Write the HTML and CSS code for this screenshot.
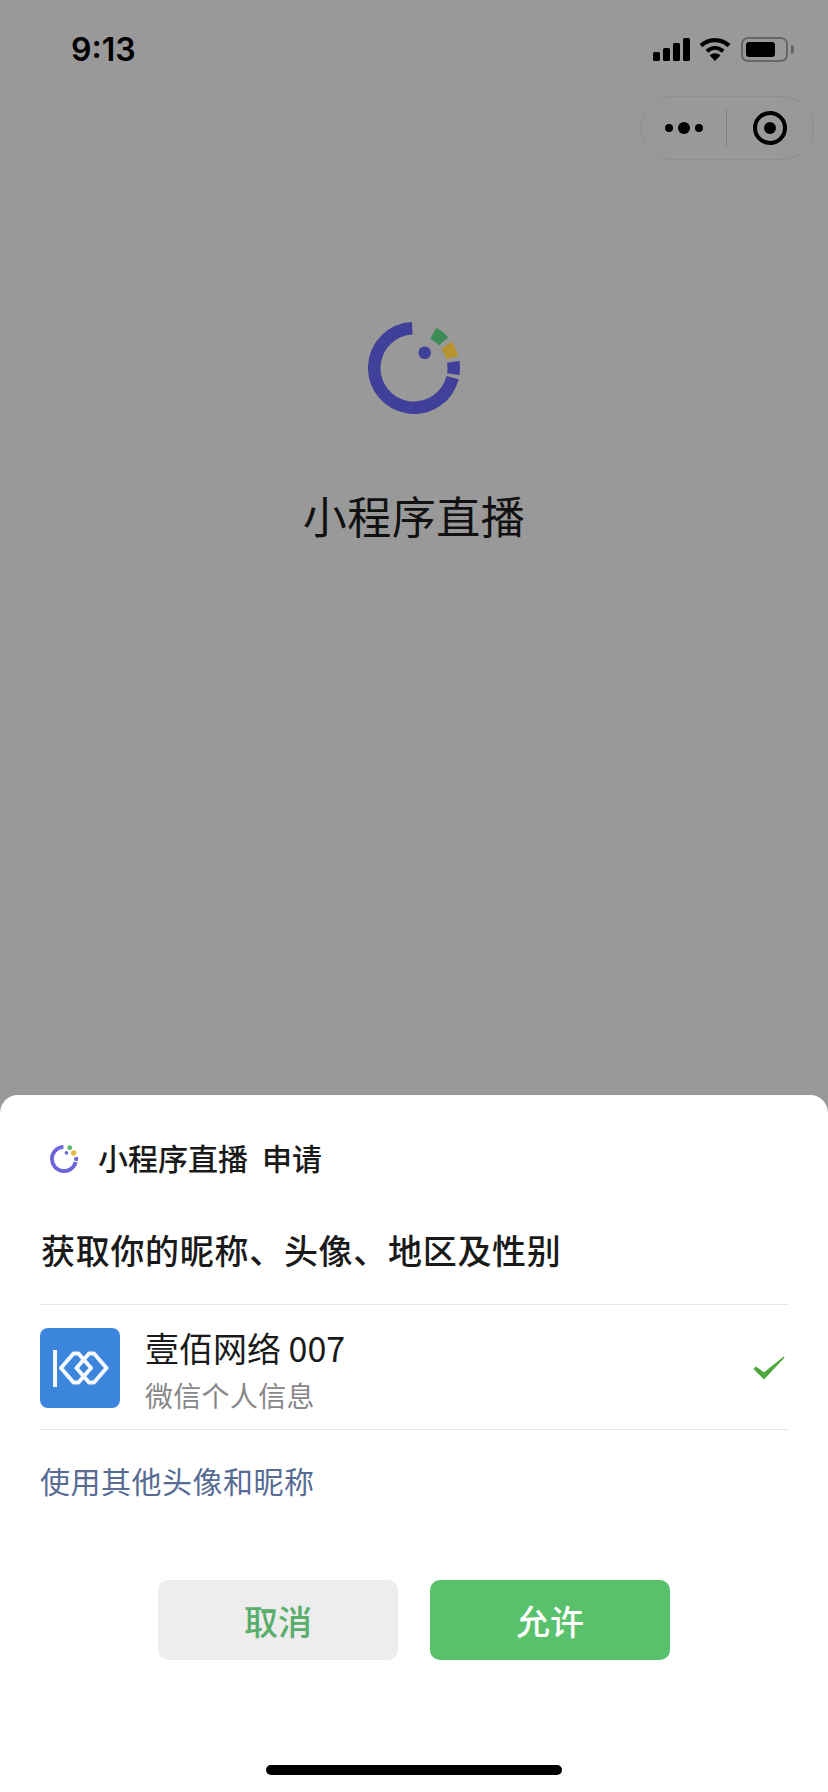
FILE: index.html
```html
<!DOCTYPE html>
<html lang="zh">
<head>
<meta charset="utf-8">
<title>小程序直播</title>
<link rel="stylesheet" href="styles.css">
</head>
<body>
<div class="page">
  <div class="dim">
    <header class="status">
      <span class="time">9:13</span>
      <div class="status-icons">
        <svg class="signal" viewBox="0 0 37 23"><rect x="0" y="14" width="7" height="9" rx="1.5"/><rect x="10" y="10" width="7" height="13" rx="1.5"/><rect x="20" y="5" width="7" height="18" rx="1.5"/><rect x="30" y="0" width="7" height="23" rx="1.5"/></svg>
        <svg class="wifi" viewBox="0 0 32 24"><path d="M2 8.6C10 1.2 22 1.2 30 8.6" fill="none" stroke="#000" stroke-width="4.2"/><path d="M7.8 14.2C12.8 9.8 19.2 9.8 24.2 14.2" fill="none" stroke="#000" stroke-width="4"/><path d="M16 24L10.6 18.4C13.8 15.6 18.2 15.6 21.4 18.4Z"/></svg>
        <div class="battery"><div class="battery-fill"></div></div>
        <div class="battery-nub"></div>
      </div>
    </header>
    <div class="capsule-row">
      <div class="capsule">
        <div class="capsule-more"><i class="dot"></i><i class="dot dot-big"></i><i class="dot"></i></div>
        <div class="capsule-line"></div>
        <div class="capsule-close"><i class="capsule-target"></i></div>
      </div>
    </div>
    <main class="hero">
      <svg class="logo-large" viewBox="0 0 92 92">
        <g fill="none" stroke-width="12.5">
          <path stroke="#40409a" d="M84.57 55.62A39.75 39.75 0 1 1 44.27 6.29"/>
          <path stroke="#40409a" d="M85.26 39.78A39.75 39.75 0 0 1 85.26 52.22"/>
          <path stroke="#b8922e" d="M78.56 23.2A39.75 39.75 0 0 1 84.39 35.71"/>
          <path stroke="#3d8b55" d="M65.4 11.3A39.75 39.75 0 0 1 75.54 19.4"/>
        </g>
        <circle cx="56.7" cy="30.8" r="6.3" fill="#40409a"/>
      </svg>
      <h1 class="hero-title">小程序直播</h1>
    </main>
  </div>
  <section class="sheet">
    <div class="app-line">
      <svg class="logo-small" viewBox="0 0 92 92">
        <path fill="none" stroke="#6a66d9" stroke-width="12.5" d="M84.57 55.62A39.75 39.75 0 1 1 44.27 6.29"/>
        <path fill="none" stroke="#6a66d9" stroke-width="12.5" d="M85.26 39.78A39.75 39.75 0 0 1 85.26 52.22"/>
        <circle cx="54" cy="26" r="6" fill="#6a66d9"/>
        <circle cx="78" cy="26" r="9" fill="#e8bb4a"/>
        <circle cx="65" cy="9" r="8" fill="#5cb870"/>
      </svg>
      <span class="app-name">小程序直播</span>
      <span class="app-verb">申请</span>
    </div>
    <h2 class="scope">获取你的昵称、头像、地区及性别</h2>
    <div class="account">
      <svg class="avatar" viewBox="0 0 80 80">
        <rect width="80" height="80" rx="8" fill="#3b86dc"/>
        <rect x="13" y="22" width="4" height="37" fill="#fff" opacity=".95"/>
        <g fill="none" stroke="#fff" stroke-width="4" stroke-linejoin="round" opacity=".95">
          <path d="M21 40L33.5 25.5H38.5L51 40L38.5 54.5H33.5Z"/>
          <path d="M36.5 40L49 25.5H54L66.5 40L54 54.5H49Z"/>
        </g>
      </svg>
      <div class="account-text">
        <div class="account-name">壹佰网络 007</div>
        <div class="account-sub">微信个人信息</div>
      </div>
      <svg class="check" viewBox="0 0 32 24"><path d="M0.5 13L3 10.4L11 16.2L30.8 0.6L31.6 1.5L11 23.6Z"/></svg>
    </div>
    <div class="other-link">使用其他头像和昵称</div>
    <div class="actions">
      <button class="btn btn-cancel">取消</button>
      <button class="btn btn-allow">允许</button>
    </div>
    <div class="home-wrap"><div class="home-bar"></div></div>
  </section>
</div>
</body>
</html>
```

FILE: styles.css
```css
* { box-sizing: border-box; }
html, body { margin: 0; padding: 0; }
body {
  width: 828px;
  height: 1792px;
  overflow: hidden;
  font-family: "Noto Sans CJK SC", "Inter", sans-serif;
}
.page {
  height: 1792px;
  display: flex;
  flex-direction: column;
  background: #999;
}
.dim { flex: 1; display: flex; flex-direction: column; color: #000; }

.status {
  height: 96px;
  padding: 37px 34px 0 71px;
  display: flex;
  justify-content: space-between;
  align-items: flex-start;
}
.time {
  font-family: "Inter", sans-serif;
  font-size: 32px;
  font-weight: 600;
  line-height: 25px;
  letter-spacing: 0;
}
.status-icons { display: flex; align-items: flex-start; }
.signal { width: 37px; height: 23px; margin-top: 1px; }
.wifi { width: 32px; height: 24px; margin-left: 9px; }
.battery {
  width: 47px;
  height: 25px;
  margin-left: 10px;
  border: 2px solid #666;
  border-radius: 7px;
  padding: 3px;
}
.battery-fill { width: 29px; height: 15px; background: #000; border-radius: 3px; }
.battery-nub {
  width: 3px;
  height: 9px;
  margin: 8px 0 0 3px;
  background: #666;
  border-radius: 0 3px 3px 0;
}

.capsule-row { display: flex; justify-content: flex-end; padding-right: 14px; }
.capsule {
  width: 174px;
  height: 64px;
  border: 1px solid #8f8f8f;
  border-radius: 32px;
  display: flex;
  align-items: center;
}
.capsule-more {
  flex: 1;
  display: flex;
  align-items: center;
  justify-content: center;
  gap: 5px;
}
.dot { width: 8px; height: 8px; background: #000; border-radius: 50%; }
.dot-big { width: 12px; height: 12px; }
.capsule-line { width: 1px; height: 37px; background: #7f7f7f; }
.capsule-close { width: 86px; display: flex; justify-content: center; }
.capsule-target {
  width: 34px;
  height: 34px;
  border: 4px solid #000;
  border-radius: 50%;
  display: flex;
  align-items: center;
  justify-content: center;
}
.capsule-target::after {
  content: "";
  width: 12px;
  height: 12px;
  background: #000;
  border-radius: 50%;
}

.hero { display: flex; flex-direction: column; align-items: center; padding-top: 162px; }
.logo-large { width: 92px; height: 92px; display: block; }
.hero-title {
  margin: 71px 0 0;
  font-size: 44px;
  line-height: 60px;
  font-weight: 400;
  color: #111;
  letter-spacing: .5px;
}

.sheet {
  height: 697px;
  background: #fff;
  border-radius: 18px 18px 0 0;
  padding: 0 40px;
  display: flex;
  flex-direction: column;
}
.app-line {
  height: 44px;
  margin-top: 42px;
  display: flex;
  align-items: center;
  padding-left: 10px;
  color: #1a1a1a;
  font-size: 30px;
  font-weight: 500;
}
.logo-small { width: 28px; height: 28px; display: block; margin-right: 20px; }
.app-name, .app-verb { padding-bottom: 4px; }
.app-verb { margin-left: 14px; }
.scope {
  margin: 51px 0 0 1px;
  height: 36px;
  font-size: 34px;
  line-height: 36px;
  font-weight: 500;
  color: #1a1a1a;
  letter-spacing: .7px;
}
.account {
  margin-top: 36px;
  height: 126px;
  padding-top: 2px;
  border-top: 1px solid #e5e5e5;
  border-bottom: 1px solid #e5e5e5;
  display: flex;
  align-items: center;
}
.avatar { width: 80px; height: 80px; display: block; flex: none; }
.account-text { flex: 1; margin: 4px 0 0 25px; }
.account-name { font-size: 34px; line-height: 44px; color: #1a1a1a; }
.account-sub { font-size: 28px; line-height: 40px; color: #888; margin-top: 5px; letter-spacing: .3px; }
.check { width: 32px; height: 24px; fill: #4fa83d; margin-right: 3px; }
.other-link {
  margin-top: 28px;
  font-size: 30px;
  line-height: 44px;
  color: #576b95;
  letter-spacing: .5px;
}
.actions {
  margin-top: 78px;
  display: flex;
  justify-content: center;
  gap: 32px;
}
.btn {
  width: 240px;
  height: 80px;
  border: 0;
  border-radius: 10px;
  font-family: inherit;
  font-size: 34px;
  font-weight: 500;
  padding: 0;
}
.btn-cancel { background: #ededed; color: #5aae6c; }
.btn-allow { background: #59c06c; color: #fff; }
.home-wrap { flex: 1; display: flex; justify-content: center; padding-top: 105px; }
.home-bar { width: 296px; height: 10px; background: #000; border-radius: 5px; }
```
